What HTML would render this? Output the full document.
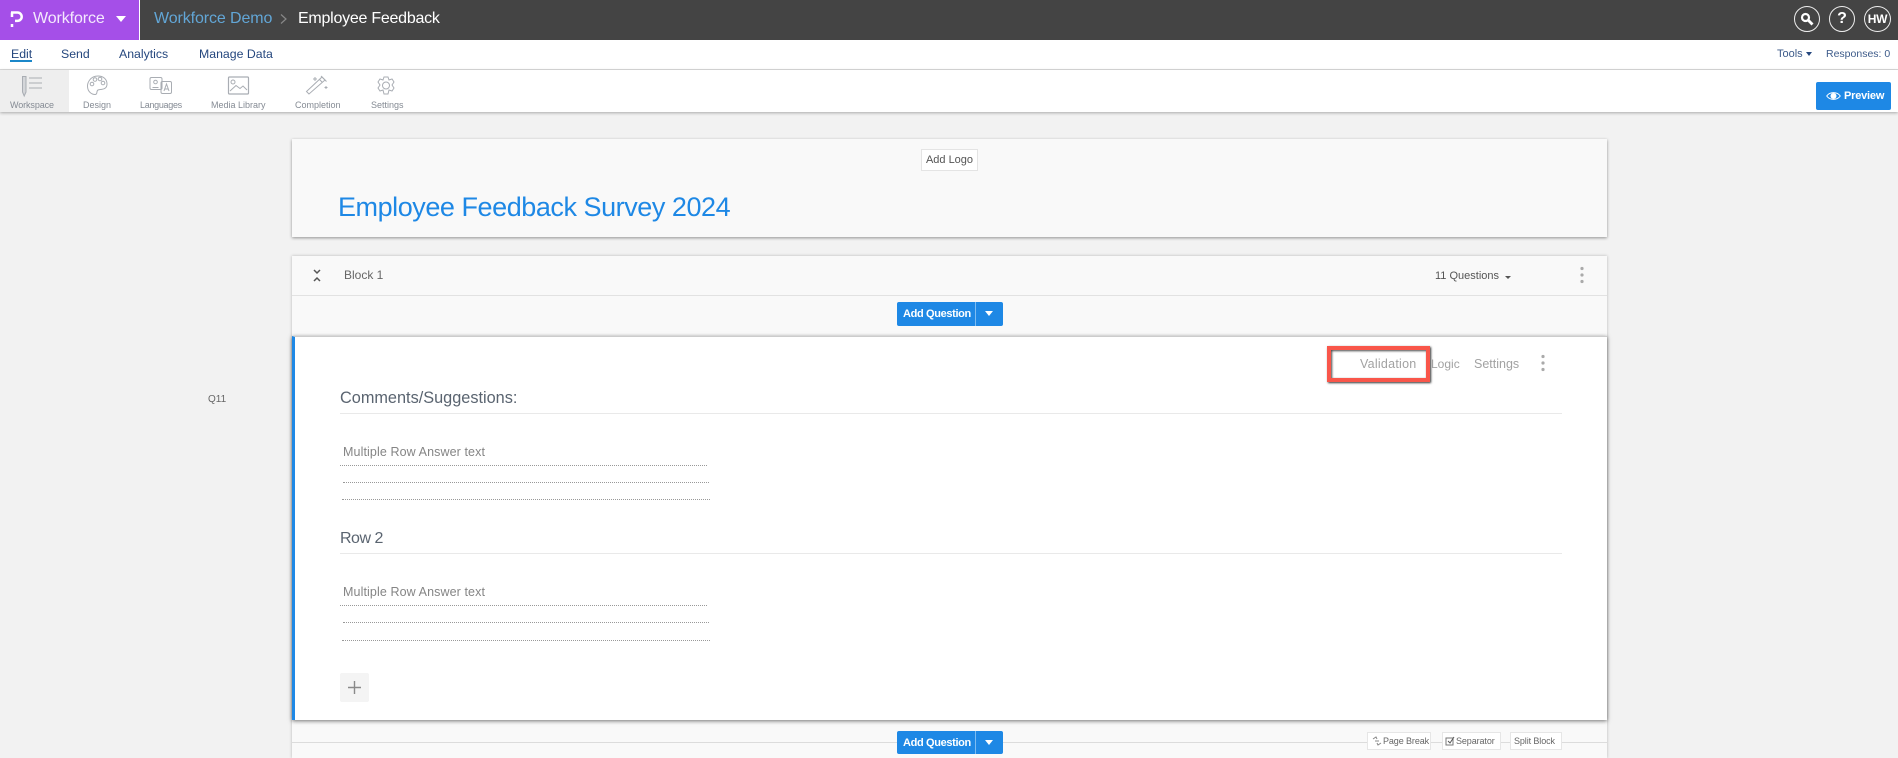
<!DOCTYPE html>
<html lang="en">
<head>
<meta charset="utf-8">
<title>Employee Feedback</title>
<style>
html,body{margin:0;padding:0;width:1898px;height:758px;overflow:hidden;background:#f2f2f2;font-family:"Liberation Sans",Arial,sans-serif}
.a{position:absolute;box-sizing:border-box}
.t{position:absolute;white-space:nowrap;line-height:20px;height:20px}
.tb{font-size:9px;color:#858b94;top:95px;text-align:center}
.sub{font-size:12.3px;color:#25477e;top:44px}
.dot{border-top:1px dotted #999;height:0}
.hr{background:#e9e9e9;height:1px}
.btn{background:#1e88e5;border-radius:2px}
.sm{background:#fff;border:1px solid #e6e6e6;height:18px;top:732px}
.sl{font-size:9px;color:#666;top:731px}
</style>
</head>
<body>
<div class="a" style="left:0;top:0;width:1898px;height:40px;background:#444"></div>
<div class="a" style="left:0;top:0;width:139px;height:40px;background:#a54fe8"></div>
<div class="a" style="left:139px;top:0;width:1px;height:40px;background:#fff"></div>
<svg class="a" style="left:9px;top:9px" width="15" height="20" viewBox="0 0 15 20"><path d="M2 3.500H8.500A4.200 4.200 0 0 1 8.500 11.900H6" fill="none" stroke="#fff" stroke-width="2.500"/><path d="M3 3.500V8M3 15V18" stroke="#fff" stroke-width="2.500"/></svg>
<div class="t" style="left:33px;top:9px;font-size:16px;color:#f4e9fd;letter-spacing:-.1px">Workforce</div>
<div class="a" style="left:116px;top:16px;width:0;height:0;border-left:5px solid transparent;border-right:5px solid transparent;border-top:6px solid #fff"></div>
<div class="t" style="left:154px;top:9px;font-size:16px;color:#62a6d6;letter-spacing:-.1px">Workforce Demo</div>
<svg class="a" style="left:279px;top:13px" width="9" height="12" viewBox="0 0 9 12"><path d="M2 1.500L7 6L2 10.500" fill="none" stroke="#888" stroke-width="1.200"/></svg>
<div class="t" style="left:298px;top:9px;font-size:16px;color:#fff;letter-spacing:-.25px">Employee Feedback</div>
<div class="a" style="left:1794px;top:6px;width:26px;height:26px;border:1.500px solid #eee;border-radius:50%"></div>
<svg class="a" style="left:1799px;top:11px" width="16" height="16" viewBox="0 0 16 16"><circle cx="6.500" cy="6.500" r="3.500" fill="none" stroke="#fff" stroke-width="2.200"/><path d="M9.300 9.300L13.500 13.500" stroke="#fff" stroke-width="2.800"/></svg>
<div class="a" style="left:1829px;top:6px;width:26px;height:26px;border:1.500px solid #eee;border-radius:50%"></div>
<div class="t" style="left:1829px;top:9px;width:26px;text-align:center;font-size:16px;font-weight:bold;color:#fff">?</div>
<div class="a" style="left:1864px;top:6px;width:27px;height:26px;border:1.500px solid #eee;border-radius:50%"></div>
<div class="t" style="left:1864px;top:9px;width:27px;text-align:center;font-size:12px;font-weight:bold;color:#fff;letter-spacing:-.3px">HW</div>

<div class="a" style="left:0;top:40px;width:1898px;height:30px;background:#fff;border-bottom:1px solid #dcdcdc"></div>
<div class="t sub" style="left:11px">Edit</div>
<div class="a" style="left:10px;top:60px;width:22px;height:2px;background:#1b87c9"></div>
<div class="t sub" style="left:61px">Send</div>
<div class="t sub" style="left:119px">Analytics</div>
<div class="t sub" style="left:199px">Manage Data</div>
<div class="t" style="left:1777px;top:44px;font-size:11px;color:#3d5b8a">Tools</div>
<div class="a" style="left:1806px;top:52px;width:0;height:0;border-left:3px solid transparent;border-right:3px solid transparent;border-top:4px solid #25477e"></div>
<div class="t" style="left:1826px;top:44px;font-size:10.500px;color:#3d5b8a">Responses: 0</div>

<div class="a" style="left:0;top:70px;width:1898px;height:42px;background:#fff;box-shadow:0 1px 3px rgba(0,0,0,.3)"></div>
<div class="a" style="left:0;top:70px;width:69px;height:42px;background:#eee"></div>
<svg class="a" style="left:0;top:70px" width="420" height="28" viewBox="0 0 420 28" fill="none" stroke="#a9adb3" stroke-width="1">
<path d="M22.500 6.500H26V22L24.200 26L22.500 22Z" fill="#d4d6d9"/><path d="M29 8H42M29 13H42M29 18H42" />
<path d="M98 6C90 6 87.500 13 87.500 16C87.500 22 92 24.500 95 24.500C98 24.500 96 21 98 20C100 19 107 20.500 107 14C107 9 103 6 98 6Z"/><circle cx="92" cy="14" r="1.800"/><circle cx="95" cy="9.500" r="1.800"/><circle cx="100" cy="9" r="1.800"/><circle cx="103" cy="13" r="1.800"/>
<rect x="150" y="7.500" width="12" height="12" rx="1.500"/><rect x="161" y="11.500" width="10.500" height="12" rx="1.500"/><circle cx="155.500" cy="12" r="1.800"/><path d="M152.500 17.500L158.500 17.500M164 21L166.500 14L169 21M165 19H168"/>
<rect x="228.500" y="7" width="20" height="17" rx="1" stroke-width="1.200"/><circle cx="233" cy="12" r="2"/><path d="M230 21L236 15.500L240 18.500L243 16L247 20"/>
<path d="M309 24L306.500 21.500L322 7L325 10Z"/><path d="M319.500 9.500L322.500 12.500M321 6L326.500 11.500M315 7V11M313 9H317M326 16V19M324.500 17.500H327.500"/>
<path d="M384 7L388 7L389 10L392 9L394 12L392 15L394 18L392 21L389 20L388 24L384 24L383 20L380 21L378 18L380 15L378 12L380 9L383 10Z"/><circle cx="386" cy="15.500" r="3.500"/>
</svg>
<div class="t tb" style="left:10px;letter-spacing:-.1px">Workspace</div>
<div class="t tb" style="left:83px">Design</div>
<div class="t tb" style="left:140px;letter-spacing:-.3px">Languages</div>
<div class="t tb" style="left:211px">Media Library</div>
<div class="t tb" style="left:295px">Completion</div>
<div class="t tb" style="left:371px">Settings</div>
<div class="a btn" style="left:1816px;top:82px;width:75px;height:28px"></div>
<svg class="a" style="left:1826px;top:90px" width="15" height="12" viewBox="0 0 15 12"><path d="M.700 6C4 1.500 11 1.500 14.300 6C11 10.500 4 10.500 .700 6Z" fill="none" stroke="#fff"/><circle cx="7.500" cy="6" r="3" fill="#fff"/></svg>
<div class="t" style="left:1844px;top:86px;font-size:11px;font-weight:bold;color:#fff;letter-spacing:-.2px">Preview</div>

<div class="t" style="left:208px;top:390px;font-size:10px;color:#666">Q11</div>

<div class="a" style="left:292px;top:139px;width:1315px;height:98px;background:#f9f9f9;box-shadow:0 1px 3px rgba(0,0,0,.4)"></div>
<div class="a" style="left:921px;top:149px;width:57px;height:22px;background:#fff;border:1px solid #e4e4e4;font-size:11px;line-height:20px;text-align:center;color:#555">Add Logo</div>
<div class="t" style="left:338px;top:192px;height:30px;line-height:30px;font-size:27px;color:#1e88e5;letter-spacing:-.45px">Employee Feedback Survey 2024</div>

<div class="a" style="left:292px;top:256px;width:1315px;height:502px;background:#f9f9f9;box-shadow:0 0 3px rgba(0,0,0,.25)"></div>
<div class="a" style="left:292px;top:295px;width:1315px;height:1px;background:#e2e2e2"></div>
<svg class="a" style="left:311px;top:267px" width="12" height="18" viewBox="0 0 12 18"><path d="M3 3L6 6L9 3M3 14L6 11L9 14" fill="none" stroke="#555" stroke-width="1.500"/></svg>
<div class="t" style="left:344px;top:265px;font-size:12px;color:#666">Block 1</div>
<div class="t" style="left:1435px;top:266px;font-size:11px;color:#555">11 Questions</div>
<div class="a" style="left:1505px;top:276px;width:0;height:0;border-left:3.500px solid transparent;border-right:3.500px solid transparent;border-top:3.500px solid #555"></div>
<svg class="a" style="left:1579px;top:265px" width="6" height="20"><circle cx="3" cy="3.500" r="1.600" fill="#aaa"/><circle cx="3" cy="10" r="1.600" fill="#aaa"/><circle cx="3" cy="16.500" r="1.600" fill="#aaa"/></svg>

<div class="a btn" style="left:897px;top:302px;width:106px;height:24px"></div>
<div class="a" style="left:975px;top:302px;width:1px;height:24px;background:#7dbcf2"></div>
<div class="t" style="left:903px;top:304px;font-size:11px;font-weight:bold;color:#fff;letter-spacing:-.35px">Add Question</div>
<div class="a" style="left:985px;top:311px;width:0;height:0;border-left:4.500px solid transparent;border-right:4.500px solid transparent;border-top:5px solid #fff"></div>

<div class="a" style="left:292px;top:336px;width:1315px;height:384px;background:#fff;border-top:1px solid #ccc;border-left:3px solid #1e88e5;box-shadow:0 1px 4px rgba(0,0,0,.55)"></div>
<div class="a" style="left:1327px;top:346px;width:103px;height:36px;border:4px solid #f9564a;box-shadow:1px 1px 2px #333,inset 1px 1px 2px #444"></div>
<div class="t" style="left:1360px;top:354px;font-size:12.500px;color:#a2a2a2;letter-spacing:.25px">Validation</div>
<div class="t" style="left:1431px;top:354px;font-size:12px;color:#a2a2a2">Logic</div>
<div class="t" style="left:1474px;top:354px;font-size:12.500px;color:#a2a2a2">Settings</div>
<svg class="a" style="left:1540px;top:353px" width="6" height="20"><circle cx="3" cy="3.500" r="1.600" fill="#aaa"/><circle cx="3" cy="10" r="1.600" fill="#aaa"/><circle cx="3" cy="16.500" r="1.600" fill="#aaa"/></svg>

<div class="t" style="left:340px;top:388px;font-size:16.300px;color:#5a6470">Comments/Suggestions:</div>
<div class="a hr" style="left:340px;top:413px;width:1222px"></div>
<div class="t" style="left:343px;top:442px;font-size:12.500px;color:#858585;letter-spacing:.1px">Multiple Row Answer text</div>
<div class="a dot" style="left:340px;top:465px;width:367px"></div>
<div class="a dot" style="left:343px;top:482px;width:366px"></div>
<div class="a dot" style="left:342px;top:499px;width:368px"></div>

<div class="t" style="left:340px;top:529px;font-size:16px;color:#5a6470;letter-spacing:-.5px">Row 2</div>
<div class="a hr" style="left:340px;top:553px;width:1222px"></div>
<div class="t" style="left:343px;top:582px;font-size:12.500px;color:#858585;letter-spacing:.1px">Multiple Row Answer text</div>
<div class="a dot" style="left:340px;top:605px;width:367px"></div>
<div class="a dot" style="left:343px;top:622px;width:366px"></div>
<div class="a dot" style="left:342px;top:640px;width:368px"></div>

<div class="a" style="left:340px;top:673px;width:29px;height:29px;background:#f4f4f4;border-radius:2px"></div>
<svg class="a" style="left:340px;top:673px" width="29" height="29"><path d="M14.500 8V21M8 14.500H21" stroke="#8a8a8a" stroke-width="1.400"/></svg>

<div class="a" style="left:292px;top:742px;width:1315px;height:1px;background:#dcdcdc"></div>
<div class="a btn" style="left:897px;top:731px;width:106px;height:23px"></div>
<div class="a" style="left:975px;top:731px;width:1px;height:23px;background:#7dbcf2"></div>
<div class="t" style="left:903px;top:733px;font-size:11px;font-weight:bold;color:#fff;letter-spacing:-.35px">Add Question</div>
<div class="a" style="left:985px;top:740px;width:0;height:0;border-left:4.500px solid transparent;border-right:4.500px solid transparent;border-top:5px solid #fff"></div>
<div class="a sm" style="left:1367px;width:64px"></div>
<svg class="a" style="left:1372px;top:736px" width="10" height="10" viewBox="0 0 10 10"><path d="M1 3L4 1L5 3M9 7L6 9L5 7M3 5L7 5" fill="none" stroke="#888"/></svg>
<div class="t sl" style="left:1383px;letter-spacing:-.1px">Page Break</div>
<div class="a sm" style="left:1442px;width:59px"></div>
<svg class="a" style="left:1445px;top:736px" width="10" height="10" viewBox="0 0 10 10"><rect x="1" y="2" width="7" height="7" fill="none" stroke="#777"/><path d="M3 5L5 7L9 1" fill="none" stroke="#555"/></svg>
<div class="t sl" style="left:1456px;letter-spacing:-.1px">Separator</div>
<div class="a sm" style="left:1510px;width:52px"></div>
<div class="t sl" style="left:1514px;letter-spacing:-.1px">Split Block</div>
</body>
</html>
